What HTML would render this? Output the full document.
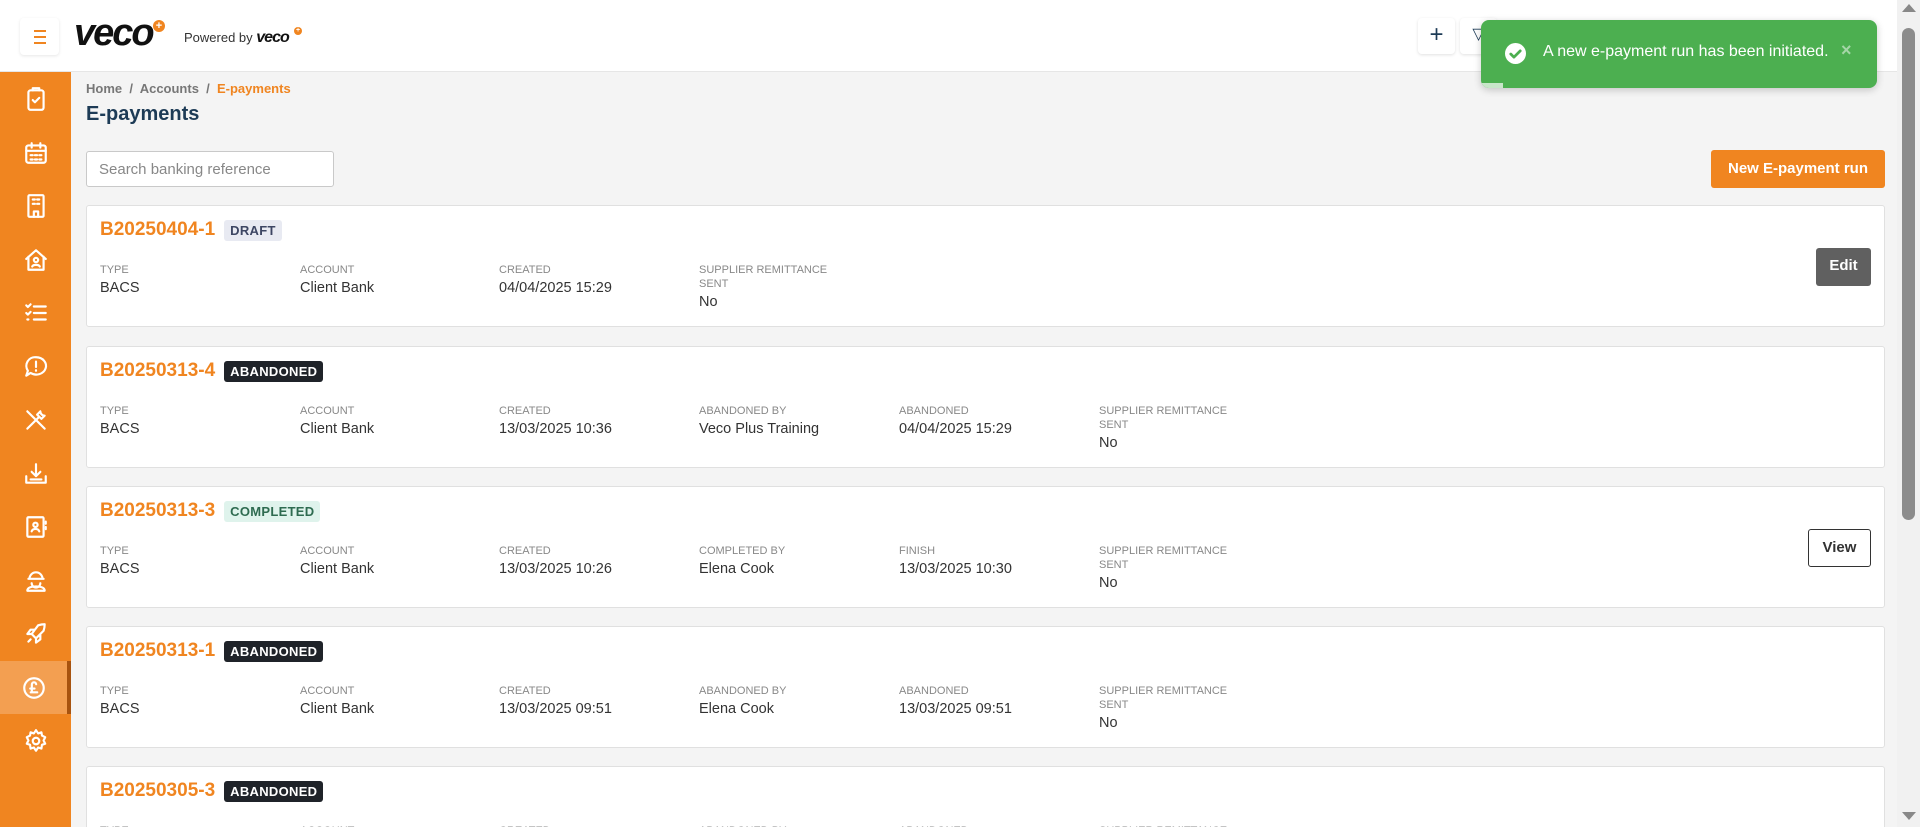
<!DOCTYPE html>
<html style="width:1920px;height:827px;overflow:hidden"><head><meta charset="utf-8"><style>
*{box-sizing:border-box;margin:0;padding:0}
body{width:1920px;height:827px;overflow:hidden;background:#f4f4f4;font-family:"Liberation Sans",Arial,sans-serif;position:relative}
.hdr{position:absolute;left:0;top:0;width:1897px;height:72px;background:#fff;border-bottom:1px solid #e6e6e6}
.ham{position:absolute;left:20px;top:18px;width:39px;height:37px;border-radius:4px;box-shadow:0 1px 3px rgba(0,0,0,.1);background:#fff}
.ham i{position:absolute;left:14px;width:12px;height:2px;background:#f08520}
.logo{position:absolute;left:74px;top:12px;font-size:38px;font-weight:bold;font-style:italic;color:#111;letter-spacing:-2px}
.plus{position:absolute;width:12px;height:12px;border-radius:50%;background:#f08520;color:#fff;font-size:11px;line-height:12px;text-align:center;font-weight:bold}
.pw{position:absolute;left:184px;top:29px;font-size:13px;color:#333}
.pw b{font-style:italic;font-size:16px;color:#111;letter-spacing:-1px}
.hb{position:absolute;top:18px;width:37px;height:36px;background:#fff;border-radius:4px;box-shadow:0 1px 3px rgba(0,0,0,.12);color:#1d3b56;font-size:24px;text-align:center;line-height:34px}
.side{position:absolute;left:0;top:72px;width:71px;height:755px;background:#f08520}
.si{position:absolute;left:0;width:71px;height:53px;display:flex;align-items:center;justify-content:center}
.si svg{width:26px;height:26px;fill:none;stroke:#fff;stroke-width:2;stroke-linecap:round;stroke-linejoin:round}
.act{background:rgba(255,255,255,.22);border-right:4px solid #a7530f}
.bc{position:absolute;left:86px;top:81px;font-size:13px;font-weight:bold;color:#777}
.bc span{color:#f08520}
h1{position:absolute;left:86px;top:103px;font-size:20px;color:#1d3b56;font-weight:bold}
.search{position:absolute;left:86px;top:151px;width:248px;height:36px;border:1px solid #c9c9c9;border-radius:3px;background:#fff;font-size:15px;color:#888;padding:9px 12px}
.newb{position:absolute;left:1711px;top:150px;width:174px;height:38px;background:#f08520;color:#fff;font-weight:bold;font-size:15px;border-radius:3px;text-align:center;line-height:38px}
.card{position:absolute;left:86px;width:1799px;height:122px;background:#fff;border:1px solid #e0e0e0;border-radius:3px}
.tt{position:absolute;left:13px;top:13px;font-size:19px;font-weight:bold;color:#f08520;display:flex;align-items:center}
.bd{margin-left:9px;font-size:13px;font-weight:bold;padding:3px 6px;border-radius:3px;letter-spacing:.3px}
.dr{background:#e8eaf2;color:#3d4663}.ab{background:#1f2329;color:#fff}.cp{background:#dff3ec;color:#2e6b50}
.col{position:absolute;top:57px;width:150px}
.lb{font-size:11px;color:#888;line-height:14px;text-transform:uppercase}
.vl{font-size:14.5px;color:#333;line-height:20px;margin-top:1px}
.btn{position:absolute;right:13px;top:42px;height:38px;border-radius:3px;font-weight:bold;font-size:15px;text-align:center;line-height:36px}
.toast{position:absolute;left:1481px;top:20px;width:396px;height:68px;background:#4caf50;border-radius:8px;box-shadow:0 2px 8px rgba(0,0,0,.2);overflow:hidden}
.sb{position:absolute;left:1897px;top:0;width:23px;height:827px;background:#f1f1f1}
</style></head><body>
<div class="hdr">
<div class="ham"><i style="top:12px"></i><i style="top:18px"></i><i style="top:24px"></i></div>
<div class="logo">veco</div><div class="plus" style="left:153px;top:20px">+</div>
<div class="pw">Powered by <b>veco</b></div><div class="plus" style="left:294px;top:27px;width:8px;height:8px;font-size:7px;line-height:8px">+</div>
<div class="hb" style="left:1418px">+</div>
<div class="hb" style="left:1460px;font-size:16px">▽</div>
</div>
<div class="side">
<div class="si" style="top:0"><svg viewBox="0 0 24 24"><rect x="5" y="4" width="14" height="18" rx="2"/><path d="M9 4V2h6v2M9 13l2 2 4-4"/></svg></div>
<div class="si" style="top:54px"><svg viewBox="0 0 24 24"><rect x="3" y="5" width="18" height="16" rx="2"/><path d="M8 3v4M16 3v4M3 10h18M7 14h2M11 14h2M15 14h2M7 18h2M11 18h2M15 18h2"/></svg></div>
<div class="si" style="top:107px"><svg viewBox="0 0 24 24"><rect x="5" y="2" width="14" height="20" rx="1"/><path d="M9 6h2M13 6h2M9 10h2M13 10h2M10 22v-5h4v5"/></svg></div>
<div class="si" style="top:161px"><svg viewBox="0 0 24 24"><path d="M3 11l9-8 9 8M5 9v12h14V9"/><circle cx="12" cy="12" r="2"/><path d="M8.5 18c1-2 6-2 7 0"/></svg></div>
<div class="si" style="top:214px"><svg viewBox="0 0 24 24"><path d="M3 5l1.5 1.5L7 4M3 12l1.5 1.5L7 11M10 6h11M10 12h11M10 18h11M4 18h1"/></svg></div>
<div class="si" style="top:268px"><svg viewBox="0 0 24 24"><path d="M12 3a9 8 0 1 1-5 14.5L3 20l1.5-4.5A8 8 0 0 1 12 3z"/><path d="M12 7v5M12 15v.5"/></svg></div>
<div class="si" style="top:321px"><svg viewBox="0 0 24 24"><path d="M4 4l16 16M4 20L14 10M16 4a4 4 0 0 0 4 4l-3 3-4-4z"/></svg></div>
<div class="si" style="top:375px"><svg viewBox="0 0 24 24"><path d="M12 3v11M8 10l4 4 4-4M3 14v6h18v-6M7 17h10"/></svg></div>
<div class="si" style="top:428px"><svg viewBox="0 0 24 24"><rect x="4" y="3" width="15" height="18" rx="1"/><circle cx="11.5" cy="10" r="2"/><path d="M8 16c1-3 6-3 7 0M21 7v2M21 12v2"/></svg></div>
<div class="si" style="top:482px"><svg viewBox="0 0 24 24"><path d="M6 10a6 6 0 0 1 12 0zM5 10h14M8 14a4 4 0 0 0 8 0M4 21c0-3 4-4 8-4s8 1 8 4z"/></svg></div>
<div class="si" style="top:535px"><svg viewBox="0 0 24 24"><path d="M14 4c3-1 6-1 6-1s0 3-1 6l-7 7-4-4zM8 12H4l3-4h4M12 16v4l4-3v-4M5 19l2-2"/></svg></div>
<div class="si act" style="top:589px"><svg viewBox="0 0 24 24"><circle cx="12" cy="12" r="9"/><path d="M14 8.5a2 2 0 0 0-4 .5v7H9h6M8.5 12.5h4"/></svg></div>
<div class="si" style="top:642px"><svg viewBox="0 0 24 24"><circle cx="12" cy="12" r="3"/><path d="M12 2l2 3 3-1 .5 3 3 1.5-1.5 3 1.5 3-3 1-.5 3.5-3-1-2 3-2-3-3 1-.5-3.5-3-1 1.5-3L3.5 8.5 6.5 7 7 4l3 1z"/></svg></div>
</div>
<div class="bc">Home &nbsp;/&nbsp; Accounts &nbsp;/&nbsp; <span>E-payments</span></div>
<h1>E-payments</h1>
<div class="search">Search banking reference</div>
<div class="newb">New E-payment run</div>

<div class="card" style="top:205px"><div class="tt">B20250404-1<span class="bd dr">DRAFT</span></div>
<div class="col" style="left:13px"><div class="lb">Type</div><div class="vl">BACS</div></div>
<div class="col" style="left:213px"><div class="lb">Account</div><div class="vl">Client Bank</div></div>
<div class="col" style="left:412px"><div class="lb">Created</div><div class="vl">04/04/2025 15:29</div></div>
<div class="col" style="left:612px"><div class="lb">Supplier Remittance Sent</div><div class="vl">No</div></div>
<div class="btn" style="width:55px;background:#606060;color:#fff">Edit</div></div>

<div class="card" style="top:346px"><div class="tt">B20250313-4<span class="bd ab">ABANDONED</span></div>
<div class="col" style="left:13px"><div class="lb">Type</div><div class="vl">BACS</div></div>
<div class="col" style="left:213px"><div class="lb">Account</div><div class="vl">Client Bank</div></div>
<div class="col" style="left:412px"><div class="lb">Created</div><div class="vl">13/03/2025 10:36</div></div>
<div class="col" style="left:612px"><div class="lb">Abandoned by</div><div class="vl">Veco Plus Training</div></div>
<div class="col" style="left:812px"><div class="lb">Abandoned</div><div class="vl">04/04/2025 15:29</div></div>
<div class="col" style="left:1012px"><div class="lb">Supplier Remittance Sent</div><div class="vl">No</div></div></div>

<div class="card" style="top:486px"><div class="tt">B20250313-3<span class="bd cp">COMPLETED</span></div>
<div class="col" style="left:13px"><div class="lb">Type</div><div class="vl">BACS</div></div>
<div class="col" style="left:213px"><div class="lb">Account</div><div class="vl">Client Bank</div></div>
<div class="col" style="left:412px"><div class="lb">Created</div><div class="vl">13/03/2025 10:26</div></div>
<div class="col" style="left:612px"><div class="lb">Completed by</div><div class="vl">Elena Cook</div></div>
<div class="col" style="left:812px"><div class="lb">Finish</div><div class="vl">13/03/2025 10:30</div></div>
<div class="col" style="left:1012px"><div class="lb">Supplier Remittance Sent</div><div class="vl">No</div></div>
<div class="btn" style="width:63px;background:#fff;color:#333;border:1px solid #333">View</div></div>

<div class="card" style="top:626px"><div class="tt">B20250313-1<span class="bd ab">ABANDONED</span></div>
<div class="col" style="left:13px"><div class="lb">Type</div><div class="vl">BACS</div></div>
<div class="col" style="left:213px"><div class="lb">Account</div><div class="vl">Client Bank</div></div>
<div class="col" style="left:412px"><div class="lb">Created</div><div class="vl">13/03/2025 09:51</div></div>
<div class="col" style="left:612px"><div class="lb">Abandoned by</div><div class="vl">Elena Cook</div></div>
<div class="col" style="left:812px"><div class="lb">Abandoned</div><div class="vl">13/03/2025 09:51</div></div>
<div class="col" style="left:1012px"><div class="lb">Supplier Remittance Sent</div><div class="vl">No</div></div></div>

<div class="card" style="top:766px;height:61px;border-bottom:none;border-radius:3px 3px 0 0"><div class="tt">B20250305-3<span class="bd ab">ABANDONED</span></div>
<div class="col" style="left:13px"><div class="lb">Type</div></div>
<div class="col" style="left:213px"><div class="lb">Account</div></div>
<div class="col" style="left:412px"><div class="lb">Created</div></div>
<div class="col" style="left:612px"><div class="lb">Abandoned by</div></div>
<div class="col" style="left:812px"><div class="lb">Abandoned</div></div>
<div class="col" style="left:1012px"><div class="lb">Supplier Remittance</div></div></div>

<div class="toast">
<svg style="position:absolute;left:24px;top:23px" width="21" height="21" viewBox="0 0 20 20"><circle cx="10" cy="10" r="10" fill="#fff"/><path d="M5.5 10.5l3 3 6-6" stroke="#4caf50" stroke-width="2.6" fill="none" stroke-linecap="round" stroke-linejoin="round"/></svg>
<div style="position:absolute;left:62px;top:23px;font-size:16px;color:#fff">A new e-payment run has been initiated.</div>
<div style="position:absolute;left:360px;top:20px;font-size:18px;color:#a5d6a7;font-weight:bold">×</div>
<div style="position:absolute;left:0;bottom:0;width:22px;height:5px;background:#c8e6c9"></div>
</div>
<div class="sb"><div style="position:absolute;left:5px;top:4px;width:0;height:0;border-left:7px solid transparent;border-right:7px solid transparent;border-bottom:8px solid #888"></div>
<div style="position:absolute;left:5px;top:28px;width:13px;height:492px;background:#8c8c8c;border-radius:7px"></div>
<div style="position:absolute;left:5px;top:812px;width:0;height:0;border-left:7px solid transparent;border-right:7px solid transparent;border-top:8px solid #888"></div></div>
</body></html>
